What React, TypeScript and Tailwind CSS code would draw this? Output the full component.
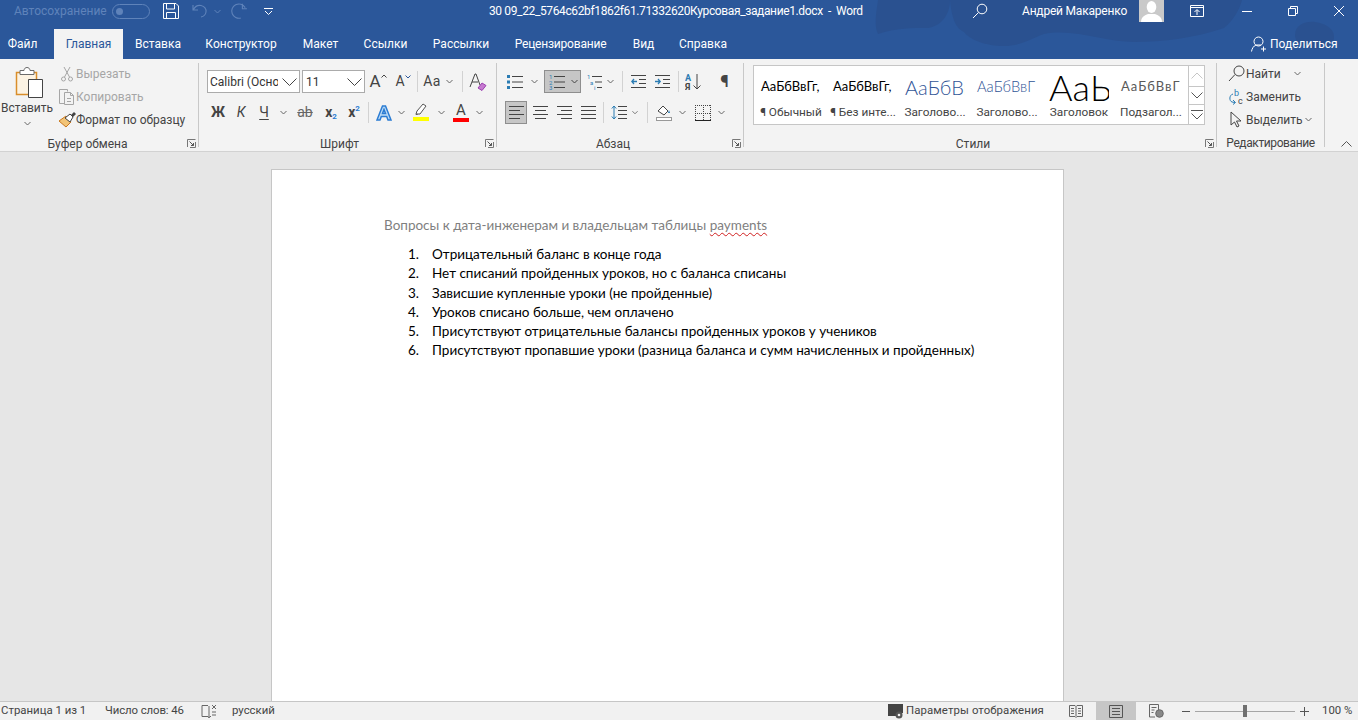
import React from "react";

const ui = { fontFamily: 'Roboto,"Noto Sans",sans-serif' };
const doc = { fontFamily: 'Lato,"Noto Sans",sans-serif' };

function S({ c, children }: { c: string; children?: React.ReactNode }) {
  return <div className={"flex items-center justify-center shrink-0 h-[23px] " + c}>{children}</div>;
}
function R({ c, children }: { c: string; children?: React.ReactNode }) {
  return <div className={"flex items-center shrink-0 h-[23px] " + c}>{children}</div>;
}
function Chev({ color = "#666" }: { color?: string }) {
  return (
    <svg width="7" height="5" viewBox="0 0 7 5" fill="none">
      <path d="M.5 1l3 3 3-3" stroke={color} strokeWidth="1" />
    </svg>
  );
}
function Sep({ c }: { c: string }) {
  return (
    <S c={c}>
      <div className="w-px h-[21px] bg-[#d2d2d2]" />
    </S>
  );
}
function Launcher() {
  return (
    <svg width="9" height="9" viewBox="0 0 9 9" fill="none">
      <path d="M.5 8V.5h8M8.5 3v5.500H3" stroke="#777" />
      <path d="M2.500 2.500l4 4M6.500 4v2.500H4" stroke="#555" />
    </svg>
  );
}
function Group({ w, label, launcher, pad, children }: { w: string; label: string; launcher?: boolean; pad?: string; children: React.ReactNode }) {
  return (
    <div className={"shrink-0 h-[84px] border-r border-[#c8c8c8] " + w}>
      <div className="h-[72px]">{children}</div>
      <div className="flex h-[16px] text-[12px] leading-[16px] text-[#444] pt-[1px]">
        <div className={"flex-1 text-center whitespace-nowrap " + (pad ?? "")}>{label}</div>
        {launcher && (
          <div className="w-[14px] flex items-center justify-center">
            <Launcher />
          </div>
        )}
      </div>
    </div>
  );
}
function Lines({ x, w, ys, color = "#444" }: { x: number; w: number; ys: number[]; color?: string }) {
  return <path d={ys.map((y) => `M${x} ${y + 0.5}h${w}`).join("")} stroke={color} />;
}
function Align({ kind }: { kind: "l" | "c" | "r" | "j" }) {
  const rows = [0, 1, 2, 3].map((i) => {
    const short = i % 2 === 1;
    const w = kind === "j" ? 15 : short ? 11 : 15;
    const x = kind === "l" || kind === "j" ? 0 : kind === "c" ? (15 - w) / 2 : 15 - w;
    return `M${x} ${1.5 + i * 4}h${w}`;
  });
  return (
    <svg width="15" height="15" viewBox="0 0 15 15" fill="none">
      <path d={rows.join("")} stroke="#444" />
    </svg>
  );
}
function GalleryItem({ preview, label, c }: { preview: string; label: string; c: string }) {
  return (
    <div className="w-[72px] shrink-0 flex flex-col items-center overflow-hidden">
      <div className="w-[66px] self-start h-[38px] pt-[3px] pl-[6px] flex items-center justify-start overflow-hidden" style={doc}>
        <span className={"whitespace-nowrap " + c}>{preview}</span>
      </div>
      <div className="h-[20px] text-[11.800px] leading-[20px] text-[#444] whitespace-nowrap mt-[-2px]">{label}</div>
    </div>
  );
}
function Tab({ c, children }: { c: string; children: React.ReactNode }) {
  return <div className={"h-[30px] shrink-0 flex items-center justify-center whitespace-nowrap " + c}>{children}</div>;
}

export default function App() {
  const list = [
    "Отрицательный баланс в конце года",
    "Нет списаний пройденных уроков, но с баланса списаны",
    "Зависшие купленные уроки (не пройденные)",
    "Уроков списано больше, чем оплачено",
    "Присутствуют отрицательные балансы пройденных уроков у учеников",
    "Присутствуют пропавшие уроки (разница баланса и сумм начисленных и пройденных)",
  ];
  return (
    <div className="w-[1358px] h-[720px] flex flex-col overflow-hidden bg-[#e6e6e6]" style={ui}>
      {/* header */}
      <div className="relative h-[59px] shrink-0 bg-[#2b579a] text-white">
        <svg className="absolute right-0 top-0" width="558" height="59" viewBox="0 0 558 59" fill="#2a5190">
          <path d="M78 0c-2 14-4 26 0 34 18-6 34-6 50-6 14-2 22-14 22-28z" />
          <path d="M150 0c2 20 6 28 14 32 6 8 22 14 40 14 16 0 24-6 40-12 30-6 60 8 90 8s60-4 90-14c10-8 16-20 18-28z" />
          <path d="M495 35c0-10 10-14 20-13 14 2 22 10 18 20-4 6-14 8-24 6-8-2-14-6-14-13z" />
        </svg>
        {/* title row */}
        <div className="relative h-[22px] mb-[7px] flex items-center text-[12px]">
          <div className="w-[112px] pl-[14px] text-[#5f83ba] whitespace-nowrap shrink-0">Автосохранение</div>
          <div className="w-[38px] h-[15px] rounded-full border border-[#5f83ba] flex items-center pl-[3px] shrink-0">
            <div className="w-[7px] h-[7px] rounded-full bg-[#5f83ba]" />
          </div>
          <div className="w-[13px] shrink-0" />
          <svg width="16" height="16" viewBox="0 0 16 16" fill="none" stroke="#fff" className="shrink-0">
            <path d="M.5.500h12.500l2.500 2.500v12.500H.5z" />
            <path d="M3.500.500v5.500h8V.5M3.500 15.500v-6h9v6" />
          </svg>
          <div className="w-[13px] shrink-0" />
          <svg width="16" height="16" viewBox="0 0 16 16" fill="none" stroke="#5f83ba" strokeWidth="1.100" className="shrink-0">
            <path d="M1 2v5h5M1.500 6.500C3 3.500 6 2 9 2.500c3.500.6 5.500 3.500 5 6.500-.4 2.500-2.500 4.500-5 5" />
          </svg>
          <div className="w-[9px] flex justify-center ml-[5px] shrink-0">
            <Chev color="#5f83ba" />
          </div>
          <div className="w-[8px] shrink-0" />
          <svg width="18" height="18" viewBox="0 0 16 16" fill="none" stroke="#5f83ba" strokeWidth="1" className="shrink-0">
            <path d="M11 1.500v4.500h4M13.500 5C11.500 2 8 1 5 2.500 2 4 .8 7.500 2 10.500s4.500 4.500 7.500 3.800" />
          </svg>
          <div className="w-[16px] shrink-0" />
          <svg width="9" height="7" viewBox="0 0 9 7" fill="none" stroke="#fff" className="shrink-0">
            <path d="M0 .5h9M1 3l3.500 3.500L8 3" />
          </svg>
          <div className="w-[216px] shrink-0" />
          <div className="w-[346px] whitespace-nowrap shrink-0 tracking-[-0.37px]">
            30 09_22_5764c62bf1862f61.71332620Курсовая_задание1.docx&nbsp; - &nbsp;Word
          </div>
          <div className="w-[137px] shrink-0" />
          <svg width="16" height="16" viewBox="0 0 16 16" fill="none" stroke="#fff" className="shrink-0">
            <circle cx="10" cy="6" r="4.800" />
            <path d="M6.500 9.500L1 15" />
          </svg>
          <div className="w-[34px] shrink-0" />
          <div className="w-[117px] whitespace-nowrap shrink-0 tracking-[-0.2px]">Андрей Макаренко</div>
          <svg width="25" height="22" viewBox="0 0 25 22" className="shrink-0">
            <rect width="25" height="22" fill="#c9c9c9" />
            <ellipse cx="12.500" cy="7" rx="4.800" ry="6" fill="#fff" />
            <path d="M2 22c0-5 4-7 7-8h7c3 1 7 3 7 8z" fill="#fff" />
          </svg>
          <div className="w-[26px] shrink-0" />
          <svg width="14" height="12" viewBox="0 0 14 12" fill="none" stroke="#fff" className="shrink-0">
            <path d="M.5.500h13v11H.5zM.5 2.500h13M7 10V5M4.500 7L7 4.500 9.500 7" />
          </svg>
          <div className="w-[38px] shrink-0" />
          <div className="w-[10px] h-px bg-white shrink-0" />
          <div className="w-[36px] shrink-0" />
          <svg width="10" height="10" viewBox="0 0 10 10" fill="none" stroke="#fff" className="shrink-0">
            <path d="M.5 2.500h7v7h-7zM2.500 2.500v-2h7v7h-2" />
          </svg>
          <div className="w-[36px] shrink-0" />
          <svg width="10" height="10" viewBox="0 0 10 10" fill="none" stroke="#fff" className="shrink-0">
            <path d="M0 0l10 10M10 0L0 10" />
          </svg>
        </div>
        {/* tabs */}
        <div className="relative h-[30px] flex items-center text-[12px] text-white">
          <Tab c="w-[54px] pr-[9px]">Файл</Tab>
          <Tab c="w-[69px] bg-[#f3f3f3] text-[#2b579a]">Главная</Tab>
          <Tab c="w-[70px]">Вставка</Tab>
          <Tab c="w-[96px]">Конструктор</Tab>
          <Tab c="w-[63px]">Макет</Tab>
          <Tab c="w-[67px]">Ссылки</Tab>
          <Tab c="w-[84px]">Рассылки</Tab>
          <Tab c="w-[115px] tracking-[-0.2px]">Рецензирование</Tab>
          <Tab c="w-[51px]">Вид</Tab>
          <Tab c="w-[68px]">Справка</Tab>
          <div className="flex-1" />
          <svg width="16" height="16" viewBox="0 0 16 16" fill="none" stroke="#fff" className="shrink-0">
            <circle cx="7.500" cy="5.500" r="4.500" />
            <path d="M.5 15.500c.5-3 2-5.500 4.500-6.500h5M12.500 10.500v5M10 13h5" />
          </svg>
          <div className="w-[70px] ml-[3px] mr-[18px] whitespace-nowrap shrink-0">Поделиться</div>
        </div>
      </div>

      {/* ribbon */}
      <div className="h-[93px] shrink-0 bg-[#f3f3f3] border-b border-[#d2d2d2] flex pt-[4px] overflow-hidden">
        {/* clipboard */}
        <Group w="w-[199px]" label="Буфер обмена" launcher pad="pr-[9px]">
          <div className="flex">
            <div className="w-[54px] shrink-0 flex flex-col items-center pt-[3px]">
              <svg width="30" height="32" viewBox="0 0 30 32" fill="none" className="ml-[6px]">
                <path d="M1.500 6.500h20v22h-20z" fill="#fcf3e3" stroke="#d98e2b" strokeWidth="1.500" />
                <path d="M5 4.500h4c0-4 6-4 6 0h4v4H5z" fill="#fff" stroke="#6b6b6b" />
                <path d="M13.500 13.500h14v18h-14z" fill="#fff" stroke="#444" />
              </svg>
              <div className="text-[12px] leading-[16px] text-[#444] mt-[2px] whitespace-nowrap">Вставить</div>
              <div className="mt-[5px]">
                <Chev />
              </div>
            </div>
            <div className="flex flex-col text-[12px] pl-[4px] mt-[-1px]">
              <R c="w-[136px]">
                <div className="w-[18px] flex justify-center shrink-0">
                  <svg width="16" height="16" viewBox="0 0 16 16" fill="none" stroke="#a6a6a6">
                    <path d="M5 1l5.500 10M11 1L5.500 11" />
                    <circle cx="4.500" cy="13" r="2" />
                    <circle cx="11.500" cy="13" r="2" />
                  </svg>
                </div>
                <span className="text-[#a6a6a6]">Вырезать</span>
              </R>
              <R c="w-[136px]">
                <div className="w-[18px] flex justify-center shrink-0">
                  <svg width="17" height="16" viewBox="0 0 17 16" fill="none" stroke="#a6a6a6">
                    <path d="M5 14.500H.5V.5h8v2M5.500 3.500h6l3 3v9h-9zM11.500 3.500v3h3M8 9.500h4M8 12.500h4" />
                  </svg>
                </div>
                <span className="text-[#a6a6a6]">Копировать</span>
              </R>
              <R c="w-[136px]">
                <div className="w-[18px] flex justify-center shrink-0">
                  <svg width="18" height="16" viewBox="0 0 18 16" fill="none">
                    <path d="M1 9l7-5 5 6-5 5z" fill="#f2c477" stroke="#c9781f" />
                    <path d="M7 6l5-4 3 3-3 5z" fill="#fff" stroke="#444" />
                    <path d="M13 3l3-3 2 2-3 3z" fill="#444" />
                  </svg>
                </div>
                <span className="text-[#444]">Формат по образцу</span>
              </R>
            </div>
          </div>
        </Group>

        {/* font */}
        <Group w="w-[298px]" label="Шрифт" launcher pad="pr-[2px]">
          <div className="pt-[7px] pl-[8px]">
            <div className="flex items-center h-[23px] text-[#444]">
              <R c="w-[93px] border border-[#ababab] bg-white justify-between pl-[2px] pr-[2px] text-[12px] overflow-hidden">
                <span className="w-[68px] overflow-hidden whitespace-nowrap text-[#333]">Calibri (Осно</span>
                <svg width="15" height="8" viewBox="0 0 15 8" fill="none" stroke="#444" className="shrink-0"><path d="M.5.500l7 7 7-7" /></svg>
              </R>
              <R c="w-[63px] ml-[2px] border border-[#ababab] bg-white justify-between pl-[3px] pr-[2px] text-[12px]">
                <span className="text-[#333]">11</span>
                <svg width="15" height="8" viewBox="0 0 15 8" fill="none" stroke="#444" className="shrink-0"><path d="M.5.500l7 7 7-7" /></svg>
              </R>
              <S c="w-[26px] text-[17px]">
                <span>A</span>
                <svg width="6" height="4" viewBox="0 0 6 4" fill="none" stroke="#444" className="self-start mt-[4px]"><path d="M.5 3.500L3 1l2.500 2.500" /></svg>
              </S>
              <S c="w-[24px] text-[14px]">
                <span>A</span>
                <svg width="6" height="4" viewBox="0 0 6 4" fill="none" stroke="#2b579a" className="self-start mt-[5px]"><path d="M.5.500L3 3l2.500-2.500" /></svg>
              </S>
              <Sep c="w-[5px]" />
              <S c="w-[22px] text-[14px] tracking-[0.5px] pl-[2px]">Aa</S>
              <S c="w-[14px]"><Chev /></S>
              <Sep c="w-[12px]" />
              <S c="w-[20px]">
                <svg width="18" height="18" viewBox="0 0 18 18" fill="none">
                  <path d="M1 14L6 1h1l4 11M3 9h6" stroke="#444" />
                  <path d="M9 15l4-5 4 2.500-4 5z" fill="#c67ad0" stroke="#9c3fb0" />
                </svg>
              </S>
            </div>
            <div className="flex items-center h-[23px] mt-[8px] text-[#444]">
              <S c="w-[22px] font-bold text-[14px]">Ж</S>
              <S c="w-[24px] italic text-[14px]">К</S>
              <S c="w-[22px] underline text-[14px] underline-offset-2">Ч</S>
              <S c="w-[16px]"><Chev /></S>
              <S c="w-[28px] text-[14px] line-through text-[#666]">ab</S>
              <S c="w-[24px] font-bold text-[14px]">
                <span>x</span>
                <span className="text-[8px] text-[#2b7cd3] mt-[8px]">2</span>
              </S>
              <S c="w-[22px] font-bold text-[14px]">
                <span>x</span>
                <span className="text-[8px] text-[#2b7cd3] mb-[8px]">2</span>
              </S>
              <Sep c="w-[7px]" />
              <S c="w-[24px]">
                <svg width="16" height="16" viewBox="0 0 16 16" fill="#bfdcf5" stroke="#2b7cd3" strokeWidth="1.500">
                  <path d="M1 15L6.500 1h3L15 15h-3l-1.300-3.500H5.300L4 15zM6.500 8.500h3L8 4.500z" />
                </svg>
              </S>
              <S c="w-[10px]"><Chev /></S>
              <S c="w-[30px]">
                <svg width="16" height="18" viewBox="0 0 16 18" fill="none" className="mt-[-1px]">
                  <path d="M3 11l1-3 6-7 3 2-6 8z" stroke="#555" fill="#fff" />
                  <path d="M2 12l2-1 1 1z" fill="#444" />
                  <rect y="14" width="16" height="4" fill="#ffff00" />
                </svg>
              </S>
              <S c="w-[11px]"><Chev /></S>
              <S c="w-[28px]">
                <div className="flex flex-col items-center w-[16px]">
                  <span className="text-[15px] leading-[13px]">A</span>
                  <div className="w-[16px] h-[4px] bg-[#ff0000] mt-[1px]" />
                </div>
              </S>
              <S c="w-[8px]"><Chev /></S>
            </div>
          </div>
        </Group>

        {/* paragraph */}
        <Group w="w-[247px]" label="Абзац" launcher>
          <div className="pt-[7px] pl-[8px]">
            <div className="flex items-center h-[23px] text-[#444]">
              <R c="w-[24px] pl-[2px]">
                <svg width="16" height="14" viewBox="0 0 16 14" fill="none">
                  <path d="M0 0h3v3H0zM0 5.500h3v3H0zM0 11h3v3H0z" fill="#2b7cb3" />
                  <Lines x={5} w={11} ys={[1, 6.500, 12]} />
                </svg>
              </R>
              <S c="w-[10px]"><Chev /></S>
              <S c="w-[37px] ml-[5px] bg-[#c6c6c6] border border-[#8e8e8e] gap-[4px] pl-[1px]">
                <svg width="18" height="16" viewBox="0 0 18 16" fill="none">
                  <text x="0" y="5" fontSize="6" fill="#2b7cb3">1</text>
                  <text x="0" y="10.500" fontSize="6" fill="#2b7cb3">2</text>
                  <text x="0" y="16" fontSize="6" fill="#2b7cb3">3</text>
                  <Lines x={5} w={11} ys={[2, 7.500, 13]} />
                </svg>
                <Chev color="#444" />
              </S>
              <S c="w-[18px] ml-[5px]">
                <svg width="16" height="16" viewBox="0 0 16 16" fill="none">
                  <text x="0" y="5" fontSize="6" fill="#2b7cb3">1</text>
                  <text x="3" y="10.500" fontSize="6" fill="#2b7cb3">a</text>
                  <text x="7" y="16" fontSize="6" fill="#2b7cb3">i</text>
                  <path d="M5 2.500h10M8 8h7M10 13.500h5" stroke="#444" />
                </svg>
              </S>
              <S c="w-[12px]"><Chev /></S>
              <Sep c="w-[12px]" />
              <S c="w-[20px]">
                <svg width="15" height="13" viewBox="0 0 15 13" fill="none">
                  <path d="M0 .5h15M8 4.500h7M8 8.500h7M0 12.500h15" stroke="#444" />
                  <path d="M6 6.500H1M3 4L.8 6.500 3 9" stroke="#2b7cb3" strokeWidth="1.300" />
                </svg>
              </S>
              <S c="w-[28px]">
                <svg width="15" height="13" viewBox="0 0 15 13" fill="none">
                  <path d="M0 .5h15M8 4.500h7M8 8.500h7M0 12.500h15" stroke="#444" />
                  <path d="M0 6.500h5M3 4l2.200 2.500L3 9" stroke="#2b7cb3" strokeWidth="1.300" />
                </svg>
              </S>
              <Sep c="w-[4px]" />
              <S c="w-[26px]">
                <svg width="16" height="17" viewBox="0 0 16 17" fill="none">
                  <text x="0" y="8" fontSize="9" fontWeight="700" fill="#2b7cb3" fontFamily="Roboto">А</text>
                  <text x="0" y="17" fontSize="9" fontWeight="700" fill="#444" fontFamily="Roboto">Я</text>
                  <path d="M12 1v15M8.500 12.500L12 16l3.500-3.500" stroke="#444" />
                </svg>
              </S>
              <S c="w-[37px] text-[17px] font-bold">¶</S>
            </div>
            <div className="flex items-center h-[23px] mt-[8px]">
              <S c="w-[22px] bg-[#c6c6c6] border border-[#8e8e8e]"><Align kind="l" /></S>
              <S c="w-[24px] ml-[1px]"><Align kind="c" /></S>
              <S c="w-[24px]"><Align kind="r" /></S>
              <S c="w-[24px]"><Align kind="j" /></S>
              <Sep c="w-[6px]" />
              <S c="w-[26px]">
                <svg width="16" height="15" viewBox="0 0 16 15" fill="none">
                  <path d="M7 1.500h9M7 5.500h9M7 9.500h9M7 13.500h9" stroke="#444" />
                  <path d="M3 1v13M.8 3.500L3 1l2.200 2.500M.8 11.500L3 14l2.200-2.500" stroke="#2b7cb3" />
                </svg>
              </S>
              <S c="w-[6px]"><Chev /></S>
              <Sep c="w-[18px]" />
              <S c="w-[16px]">
                <svg width="16" height="17" viewBox="0 0 16 17" fill="none">
                  <path d="M2 7l5-5 5 5-4 4z" stroke="#444" fill="#fff" />
                  <path d="M13 6l-1 3h2z" fill="#2b7cb3" />
                  <rect x=".5" y="13.500" width="15" height="3" fill="#fff" stroke="#999" />
                </svg>
              </S>
              <S c="w-[20px]"><Chev /></S>
              <S c="w-[22px]">
                <svg width="16" height="16" viewBox="0 0 16 16" fill="none" shapeRendering="crispEdges">
                  <path d="M0 0h16M0 8h16M0 0v16M8 0v16M15.500 0v16" stroke="#444" strokeDasharray="1 1" />
                  <path d="M0 15.500h16" stroke="#222" />
                </svg>
              </S>
              <S c="w-[14px]"><Chev /></S>
            </div>
          </div>
        </Group>

        {/* styles */}
        <Group w="w-[473px]" label="Стили" launcher>
          <div className="pt-[2px] pl-[9px]">
            <div className="w-[452px] h-[60px] border border-[#c6c6c6] bg-white flex pl-[1px]">
              <GalleryItem preview="АаБбВвГг," label="¶ Обычный" c="text-[13px] text-black" />
              <GalleryItem preview="АаБбВвГг," label="¶ Без инте..." c="text-[13px] text-black" />
              <GalleryItem preview="АаБбВвГг" label="Заголово..." c="text-[20px] font-light text-[#2f5496]" />
              <GalleryItem preview="АаБбВвГ" label="Заголово..." c="text-[14.700px] font-light text-[#2f5496]" />
              <GalleryItem preview="АаЬ" label="Заголовок" c="text-[36px] font-light text-black" />
              <GalleryItem preview="АаБбВвГ" label="Подзагол..." c="text-[13px] tracking-[1px] text-[#595959]" />
              <div className="w-[17px] shrink-0 flex flex-col border-l border-[#c6c6c6] ml-[1px]">
                <div className="h-[20px] flex items-center justify-center">
                  <svg width="12" height="7" viewBox="0 0 12 7" fill="none" stroke="#c6c6c6"><path d="M.5 6.500L6 1l5.500 5.500" /></svg>
                </div>
                <div className="h-[20px] flex items-center justify-center border-y border-[#c6c6c6]">
                  <svg width="12" height="7" viewBox="0 0 12 7" fill="none" stroke="#555"><path d="M.5.500L6 6l5.500-5.500" /></svg>
                </div>
                <div className="h-[18px] flex items-center justify-center mt-px">
                  <svg width="12" height="10" viewBox="0 0 12 10" fill="none" stroke="#555"><path d="M0 .5h12M.5 3.500L6 9l5.500-5.500" /></svg>
                </div>
              </div>
            </div>
          </div>
        </Group>

        {/* editing */}
        <Group w="w-[108px]" label="Редактирование" pad="tracking-[-0.4px]">
          <div className="flex flex-col text-[12px] text-[#444] pl-[10px] mt-[-1px]">
            <R c="">
              <div className="w-[19px] flex justify-center shrink-0">
                <svg width="17" height="17" viewBox="0 0 17 17" fill="none" stroke="#444">
                  <circle cx="11" cy="6" r="5" />
                  <path d="M7 9.500L1 16" />
                </svg>
              </div>
              <span>Найти</span>
              <span className="ml-[13px]"><Chev /></span>
            </R>
            <R c="">
              <div className="w-[19px] flex justify-center shrink-0">
                <svg width="17" height="16" viewBox="0 0 17 16" fill="none">
                  <text x="6" y="7" fontSize="9" fill="#2b7cb3" fontFamily="Roboto">b</text>
                  <text x="10" y="15" fontSize="9" fill="#444" fontFamily="Roboto">c</text>
                  <path d="M5 5C1 6 1 12 4 13l3 .5M5 11l2.500 2.500L5 15.500" stroke="#2b7cb3" />
                </svg>
              </div>
              <span>Заменить</span>
            </R>
            <R c="">
              <div className="w-[19px] flex justify-center shrink-0">
                <svg width="17" height="17" viewBox="0 0 17 17" fill="none" stroke="#444">
                  <path d="M3 1l10 9H8.500l2.500 5-2 1-2.500-5L3 14z" />
                </svg>
              </div>
              <span>Выделить</span>
              <span className="ml-[2px]"><Chev /></span>
            </R>
          </div>
        </Group>
        <div className="flex-1 h-[84px] flex items-end justify-center pl-[10px]">
          <svg width="11" height="6" viewBox="0 0 11 6" fill="none" stroke="#555" className="mt-[-2px]">
            <path d="M.5 5.500l5-5 5 5" />
          </svg>
        </div>
      </div>

      {/* document */}
      <div className="flex-1 min-h-0 overflow-hidden bg-[#e6e6e6] pt-[17px] pl-[271px]">
        <div className="w-[793px] h-[600px] bg-white border border-[#c6c6c6] pl-[112px] pt-[46px] text-[#000] text-[13.500px]" style={doc}>
          <div className="leading-[19px] text-[#7f7f7f] whitespace-nowrap">
            Вопросы к дата-инженерам и владельцам таблицы{" "}
            <span className="underline decoration-wavy decoration-[#d02020] decoration-1 underline-offset-[2px]">payments</span>
          </div>
          <div className="mt-[10px]">
            {list.map((t, i) => (
              <div key={t} className="flex h-[19.300px] leading-[19.300px] whitespace-nowrap">
                <span className="w-[24px] ml-[24px] shrink-0">{i + 1}.</span>
                <span>{t}</span>
              </div>
            ))}
          </div>
        </div>
      </div>

      {/* status */}
      <div className="h-[19px] shrink-0 bg-[#f1f1f1] border-t border-[#c6c6c6] flex items-center text-[11.400px] text-[#444]">
        <span className="w-[105px] pl-[1px] whitespace-nowrap shrink-0">Страница 1 из 1</span>
        <span className="w-[96px] whitespace-nowrap shrink-0 tracking-[-0.1px]">Число слов: 46</span>
        <svg width="16" height="15" viewBox="0 0 16 15" fill="none" stroke="#666" className="shrink-0">
          <path d="M7 1.500H1v11h6l1 1.500 1-1.500h1M8 2v11" />
          <path d="M11 1l4 4M15 1l-4 4M11 8h4M11 11h4" />
        </svg>
        <span className="ml-[15px] whitespace-nowrap">русский</span>
        <div className="flex-1" />
        <svg width="16" height="16" viewBox="0 0 16 16" className="shrink-0" fill="#444">
          <path d="M0 1h15v9H8v3H3l-3 0z" />
          <circle cx="11" cy="12" r="3.500" fill="#555" />
          <circle cx="11" cy="12" r="1.300" fill="#f1f1f1" />
        </svg>
        <span className="w-[165px] pl-[2px] whitespace-nowrap shrink-0 tracking-[0.1px]">Параметры отображения</span>
        <svg width="14" height="13" viewBox="0 0 14 13" fill="none" stroke="#666" className="shrink-0">
          <path d="M.5.500h5.500l1 1 1-1h5.500v11H8l-1 1-1-1H.5zM7 1.500v10M2 3.500h3M2 6h3M2 8.500h3M9 3.500h3M9 6h3M9 8.500h3" />
        </svg>
        <div className="w-[40px] h-[19px] bg-[#c6c6c6] ml-[13px] flex items-center justify-center shrink-0">
          <svg width="14" height="13" viewBox="0 0 14 13" fill="none" stroke="#555">
            <path d="M.5.500h13v12H.5zM3 3.500h8M3 6.500h8M3 9.500h8" />
          </svg>
        </div>
        <svg width="15" height="14" viewBox="0 0 15 14" fill="none" stroke="#666" className="ml-[13px] shrink-0">
          <path d="M6 13H.5V.5h9V6M2.500 3.500h5M2.500 6h3M2.500 8.500h2" />
          <circle cx="10.500" cy="9.500" r="3.800" fill="#888" />
        </svg>
        <div className="w-[8px] h-px bg-[#555] ml-[18px] shrink-0" />
        <div className="w-[100px] h-px bg-[#a6a6a6] ml-[5px] shrink-0 flex items-center justify-center">
          <div className="w-[4px] h-[12px] bg-[#707070] shrink-0" />
        </div>
        <svg width="9" height="9" viewBox="0 0 9 9" fill="none" stroke="#555" className="ml-[5px] shrink-0">
          <path d="M0 4.500h9M4.500 0v9" />
        </svg>
        <span className="w-[36px] ml-[13px] whitespace-nowrap shrink-0">100 %</span>
      </div>
    </div>
  );
}
